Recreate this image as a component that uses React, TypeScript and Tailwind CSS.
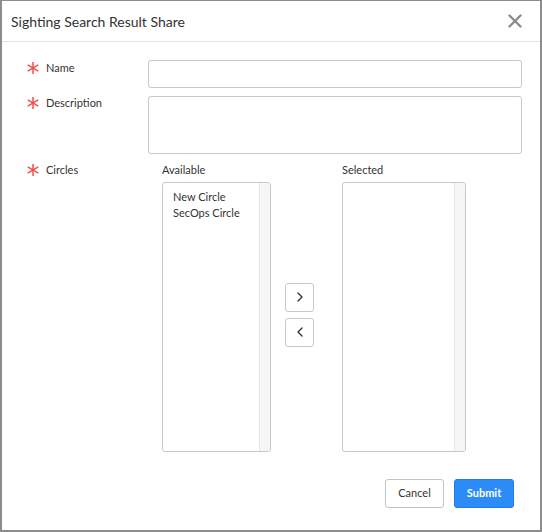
import { ChevronLeft, ChevronRight, X } from "lucide-react";

function Asterisk() {
  return (
    <svg width="12" height="12" viewBox="0 0 12 12" className="shrink-0">
      <g stroke="#f0504a" strokeWidth="1.5" strokeLinecap="round">
        <line x1="6" y1="0.5" x2="6" y2="11.5" />
        <line x1="1.2" y1="3.2" x2="10.8" y2="8.8" />
        <line x1="1.2" y1="8.8" x2="10.8" y2="3.2" />
      </g>
    </svg>
  );
}

function Label({ text }: { text: string }) {
  return (
    <div className="w-[146px] shrink-0 flex items-start gap-[7px] pl-[25px]">
      <span className="mt-[1px]">
        <Asterisk />
      </span>
      <span className="text-[11px] leading-[14px] text-[#333]">{text}</span>
    </div>
  );
}

function ListBox({ items, width }: { items: string[]; width: string }) {
  return (
    <div className={`${width} h-[270px] border border-[#c8c8c8] rounded-[3px] flex overflow-hidden`}>
      <div className="flex-1 pt-[6px] pl-[10px] text-[11px] leading-[16px] text-[#333]">
        {items.map((i) => (
          <div key={i}>{i}</div>
        ))}
      </div>
      <div className="w-[11px] bg-[#f6f6f6] border-l border-[#e6e6e6]" />
    </div>
  );
}

export default function App() {
  return (
    <div
      className="w-[542px] h-[532px] bg-[#8c8c8c] pt-px pl-[2px] pr-[2px] pb-[2px]"
      style={{ fontFamily: "Lato, 'Liberation Sans', sans-serif" }}
    >
      <div className="w-full h-full bg-white flex flex-col">
        <div className="h-[41px] border-b border-[#e3e3e3] flex items-center justify-between pl-[9px] pr-[14px] shrink-0">
          <span className="text-[14px] text-[#333] pt-[1px]">Sighting Search Result Share</span>
          <X className="w-[22px] h-[22px] text-[#8a8a8a]" strokeWidth={2.6} />
        </div>

        <div className="flex flex-col pt-[19px] pr-[18px]">
          <div className="flex">
            <Label text="Name" />
            <input className="flex-1 h-[28px] border border-[#c8c8c8] rounded-[3px] -mt-[1px]" />
          </div>

          <div className="flex mt-[8px]">
            <Label text="Description" />
            <textarea className="flex-1 h-[58px] border border-[#c8c8c8] rounded-[3px] resize-none" />
          </div>

          <div className="flex mt-[9px]">
            <Label text="Circles" />
            <div className="flex pl-[14px]">
              <div className="flex flex-col">
                <div className="text-[11px] leading-[14px] text-[#333] h-[19px]">Available</div>
                <ListBox items={["New Circle", "SecOps Circle"]} width="w-[109px]" />
              </div>
              <div className="w-[71px] flex flex-col items-start justify-center gap-[6px] pt-[14px] pl-[14px]">
                <button className="w-[29px] h-[29px] border border-[#c8c8c8] rounded-[3px] flex items-center justify-center text-[#333]">
                  <ChevronRight className="w-[16px] h-[16px]" strokeWidth={2} />
                </button>
                <button className="w-[29px] h-[29px] border border-[#c8c8c8] rounded-[3px] flex items-center justify-center text-[#333]">
                  <ChevronLeft className="w-[16px] h-[16px]" strokeWidth={2} />
                </button>
              </div>
              <div className="flex flex-col">
                <div className="text-[11px] leading-[14px] text-[#333] h-[19px]">Selected</div>
                <ListBox items={[]} width="w-[124px]" />
              </div>
            </div>
          </div>

          <div className="flex justify-end gap-[10px] mt-[27px] pr-[8px]">
            <button className="w-[59px] h-[29px] border border-[#c4c4c4] rounded-[3px] text-[11px] text-[#333] bg-white">
              Cancel
            </button>
            <button className="w-[60px] h-[29px] border border-[#1f7de8] rounded-[3px] text-[11px] font-bold text-white bg-[#2b8cf7]">
              Submit
            </button>
          </div>
        </div>
      </div>
    </div>
  );
}
